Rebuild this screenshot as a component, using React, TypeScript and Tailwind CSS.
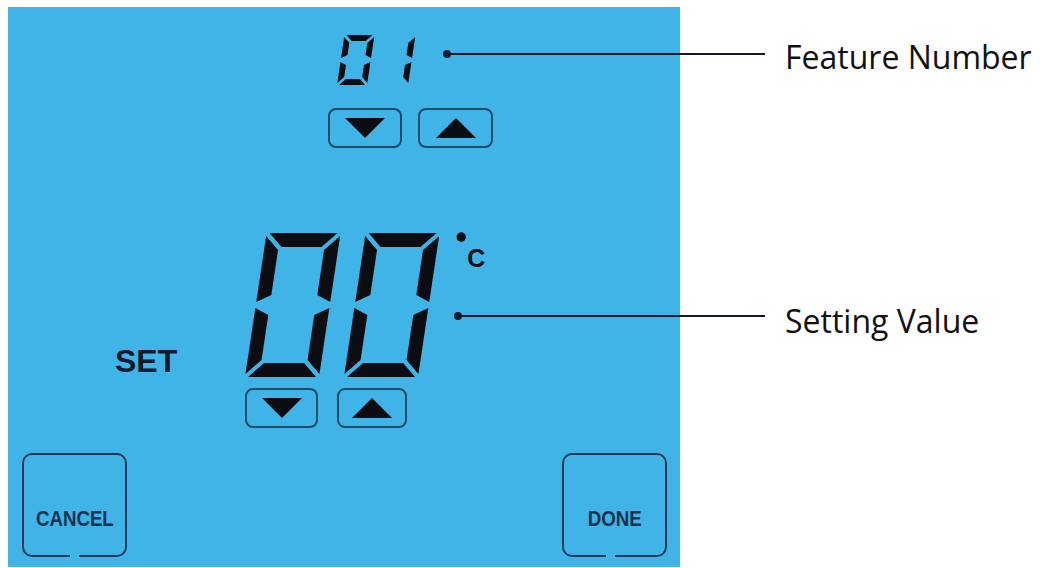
import React from "react";

type DigitProps = {
  on: string;
  w: number;
  h: number;
  t: number;
  g: number;
  slant: number;
  color?: string;
};

// one LCD digit, the segments are the hardware of the display
const Digit: React.FC<DigitProps> = ({ on, w, h, t, g, slant, color = "#0b0d12" }) => {
  const m = h / 2;
  const segs: Record<string, number[][]> = {
    a: [[g, 0], [w - g, 0], [w - g - t, t], [g + t, t]],
    b: [[w, g], [w, m - g], [w - t, m - t / 2 - g], [w - t, g + t]],
    c: [[w, m + g], [w, h - g], [w - t, h - t - g], [w - t, m + t / 2 + g]],
    d: [[g + t, h - t], [w - g - t, h - t], [w - g, h], [g, h]],
    e: [[0, m + g], [t, m + t / 2 + g], [t, h - t - g], [0, h - g]],
    f: [[0, g], [t, g + t], [t, m - t / 2 - g], [0, m - g]],
    g: [[g + t / 2, m], [g + t, m - t / 2], [w - g - t, m - t / 2], [w - g - t / 2, m], [w - g - t, m + t / 2], [g + t, m + t / 2]],
  };
  const off = slant * h;
  const angle = (Math.atan(slant) * 180) / Math.PI;
  return (
    <svg width={w + off} height={h} viewBox={`0 0 ${w + off} ${h}`} aria-hidden="true">
      <g transform={`translate(${off} 0) skewX(${-angle})`}>
        {on.split("").map((k) => (
          <polygon key={k} points={segs[k].map((p) => p.join(",")).join(" ")} fill={color} />
        ))}
      </g>
    </svg>
  );
};

const Tri: React.FC<{ up?: boolean }> = ({ up }) => (
  <svg width="40" height="20" viewBox="0 0 40 20" aria-hidden="true">
    <polygon points={up ? "20,0 40,20 0,20" : "0,0 40,0 20,20"} fill="#0b0d12" />
  </svg>
);

const ArrowBtn: React.FC<{ up?: boolean; w: string }> = ({ up, w }) => (
  <div className={`flex h-[40px] ${w} items-center justify-center rounded-[8px] border-2 border-[#1f4a68]`}>
    <Tri up={up} />
  </div>
);

const SoftKey: React.FC<{ label: string; gap: string }> = ({ label, gap }) => (
  <div className="relative flex h-[104px] w-[105px] items-end justify-center rounded-[10px] border-2 border-[#173956] pb-[25px]">
    <span className="origin-center scale-x-[0.85] font-['Liberation_Sans',Arial,sans-serif] text-[22px] leading-none font-bold text-[#16324f]">
      {label}
    </span>
    <span className={`absolute bottom-[-2px] h-[2px] w-[9px] bg-[#40b4e6] ${gap}`} />
  </div>
);

export default function App() {
  return (
    <div className="relative flex h-[568px] w-[1048px] bg-white">
      <div className="ml-[8px] mt-[7px] flex h-[560px] w-[672px] flex-col bg-[#40b4e6] pt-[28px]">
        <div role="img" aria-label="01" className="ml-[329px] flex gap-[3px]">
          <Digit on="abcdef" w={30} h={50} t={6} g={2} slant={0.15} />
          <Digit on="bc" w={30} h={50} t={6} g={2} slant={0.15} />
        </div>
        <div className="ml-[320px] mt-[23px] flex gap-[16px]">
          <ArrowBtn w="w-[74px]" />
          <ArrowBtn up w="w-[75px]" />
        </div>

        <div className="mt-[85px] flex items-end">
          <span className="ml-[107px] w-[130px] font-['Liberation_Sans',Arial,sans-serif] text-[32px] leading-none font-bold text-[#0e1a2b]">
            SET
          </span>
          <div role="img" aria-label="00" className="flex gap-[3px]">
            <Digit on="abcdef" w={74} h={144} t={14} g={3} slant={0.15} />
            <Digit on="abcdef" w={74} h={144} t={14} g={3} slant={0.15} />
          </div>
          <div className="ml-[18px] flex self-start font-['Liberation_Sans',Arial,sans-serif] leading-none text-[#0b0d12]">
            <span className="mt-[-2px] text-[20px] font-bold [-webkit-text-stroke:3px_#0b0d12]">°</span>
            <span className="ml-[2px] mt-[13px] text-[25px] font-bold">C</span>
          </div>
        </div>
        <div className="ml-[237px] mt-[11px] flex gap-[19px]">
          <ArrowBtn w="w-[73px]" />
          <ArrowBtn up w="w-[70px]" />
        </div>

        <div className="mt-auto flex justify-between pb-[10px] pl-[14px] pr-[13px]">
          <SoftKey label="CANCEL" gap="left-[46px]" />
          <SoftKey label="DONE" gap="left-[42px]" />
        </div>
      </div>

      <div className="ml-[105px] flex flex-col pt-[37px] font-['Open_Sans',sans-serif] text-[32px] leading-[40px] text-[#111]">
        <span>Feature Number</span>
        <span className="mt-[224px]">Setting Value</span>
      </div>

      {/* leader lines */}
      <span className="absolute left-[443px] top-[50px] h-[8px] w-[8px] rounded-full bg-[#0d1b2a]" />
      <span className="absolute left-[447px] top-[53px] h-[2px] w-[318px] bg-[#111a24]" />
      <span className="absolute left-[454px] top-[312px] h-[8px] w-[8px] rounded-full bg-[#0d1b2a]" />
      <span className="absolute left-[458px] top-[315px] h-[2px] w-[307px] bg-[#111a24]" />
    </div>
  );
}
